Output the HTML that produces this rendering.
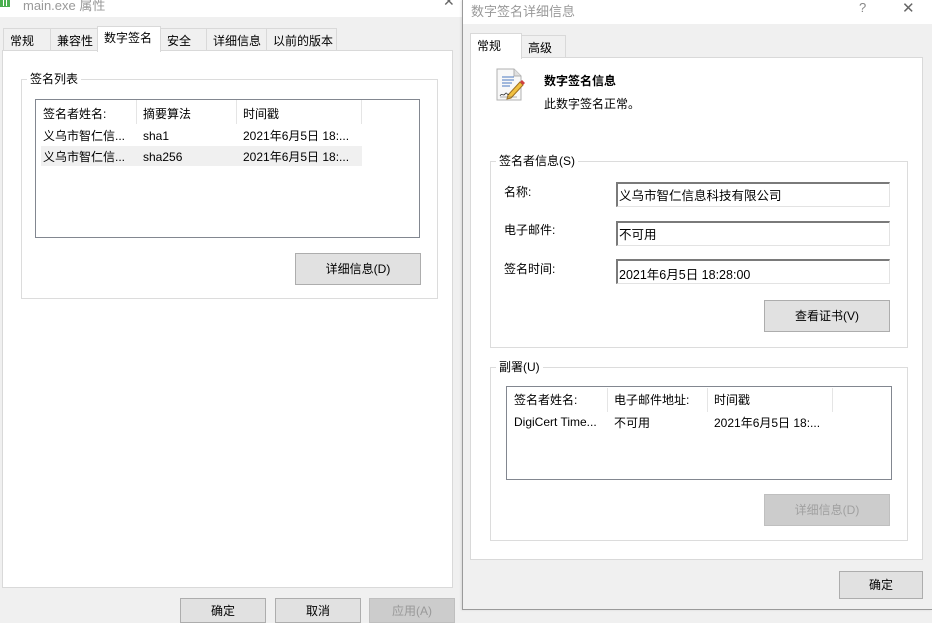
<!DOCTYPE html>
<html><head><meta charset="utf-8"><style>
*{margin:0;padding:0;box-sizing:border-box}
body{width:932px;height:613px;overflow:hidden;background:#f0f0f0;font-family:"Liberation Sans","Noto Sans CJK SC",sans-serif;font-size:12px;color:#000;position:relative}
.a{position:absolute;white-space:nowrap}
.tab{position:absolute;background:#f0f0f0;border:1px solid #d9d9d9;border-bottom:none;padding:3px 0 0 6px;height:23px}
.panel{position:absolute;background:#fff;border:1px solid #d9d9d9}
.grp{position:absolute;border:1px solid #dcdcdc}
.lbl{position:absolute;background:#fff;padding:0 3px;line-height:14px}
.lv{position:absolute;border:1px solid #828790;background:#fff}
.btn{position:absolute;background:#e1e1e1;border:1px solid #adadad;text-align:center}
.tb{position:absolute;background:#fff;border:1px solid #e3e3e3;border-top:2px solid #7a7a7a;border-left:2px solid #7a7a7a;padding:1px 0 0 1px;font-size:12.5px}
.div{position:absolute;width:1px;background:#e5e5e5}
</style></head><body>
<!-- left window -->
<div class="a" style="left:0;top:0;width:462px;height:17px;background:#fff"></div>
<div class="a" style="left:0;top:0;width:10px;height:7px;background:#4caf50"></div>
<div class="a" style="left:3px;top:0;width:1px;height:6px;background:#fff"></div>
<div class="a" style="left:6px;top:0;width:1px;height:6px;background:#fff"></div>
<div class="a" style="left:23px;top:-5px;color:#999;font-size:13px">main.exe 属性</div>
<div class="a" style="left:443px;top:-7px;color:#666;font-size:14px">✕</div>

<div class="tab" style="left:3px;top:28px;width:48px">常规</div>
<div class="tab" style="left:50px;top:28px;width:48px">兼容性</div>
<div class="tab" style="left:206px;top:28px;width:61px">详细信息</div>
<div class="tab" style="left:266px;top:28px;width:71px">以前的版本</div>
<div class="tab" style="left:160px;top:28px;width:47px">安全</div>
<div class="panel" style="left:2px;top:50px;width:451px;height:538px"></div>
<div class="tab" style="left:97px;top:26px;width:64px;height:26px;background:#fff;padding-top:2px;z-index:2">数字签名</div>

<div class="grp" style="left:21px;top:79px;width:417px;height:220px"></div>
<div class="lbl" style="left:27px;top:72px">签名列表</div>
<div class="lv" style="left:35px;top:99px;width:385px;height:139px"></div>
<div class="div" style="left:136px;top:100px;height:24px"></div>
<div class="div" style="left:236px;top:100px;height:24px"></div>
<div class="div" style="left:361px;top:100px;height:24px"></div>
<div class="a" style="left:41px;top:146px;width:321px;height:20px;background:#f0f0f0"></div>
<div class="a" style="left:43px;top:105px">签名者姓名:</div>
<div class="a" style="left:143px;top:105px">摘要算法</div>
<div class="a" style="left:243px;top:105px">时间戳</div>
<div class="a" style="left:43px;top:127px">义乌市智仁信...</div>
<div class="a" style="left:143px;top:129px">sha1</div>
<div class="a" style="left:243px;top:127px">2021年6月5日 18:...</div>
<div class="a" style="left:43px;top:148px">义乌市智仁信...</div>
<div class="a" style="left:143px;top:150px">sha256</div>
<div class="a" style="left:243px;top:148px">2021年6月5日 18:...</div>
<div class="btn" style="left:295px;top:253px;width:126px;height:32px;line-height:30px">详细信息(D)</div>

<div class="btn" style="left:180px;top:598px;width:86px;height:25px;line-height:24px">确定</div>
<div class="btn" style="left:275px;top:598px;width:86px;height:25px;line-height:24px">取消</div>
<div class="btn" style="left:369px;top:598px;width:86px;height:25px;line-height:24px;background:#ccc;border-color:#bfbfbf;color:#999">应用(A)</div>

<!-- right dialog -->
<div class="a" style="left:462px;top:0;width:470px;height:610px;background:#f0f0f0;border-left:1px solid #9a9a9a;border-bottom:1px solid #9a9a9a;box-shadow:-1px 0 2px rgba(0,0,0,.1)"></div>
<div class="a" style="left:463px;top:0;width:469px;height:24px;background:#fff"></div>
<div class="a" style="left:471px;top:1px;color:#999;font-size:13px">数字签名详细信息</div>
<div class="a" style="left:859px;top:0px;color:#888;font-size:13px">?</div>
<div class="a" style="left:902px;top:-1px;color:#666;font-size:15px">✕</div>

<div class="tab" style="left:521px;top:35px;width:45px;height:23px">高级</div>
<div class="panel" style="left:470px;top:57px;width:453px;height:503px"></div>
<div class="tab" style="left:470px;top:33px;width:52px;height:26px;background:#fff;padding-top:3px;z-index:2">常规</div>

<svg class="a" style="left:495px;top:68px" width="32" height="34" viewBox="0 0 32 34">
<path d="M2 1h17l7 7v24H2z" fill="#f8f8f8" stroke="#b0b0b0"/>
<path d="M19 1v7h7" fill="#e0e0e0" stroke="#b0b0b0"/>
<path d="M7 9h12M7 12h12M7 15h10M7 18h8" stroke="#4a78c0" stroke-width="1"/>
<path d="M13 27l12-13 3 3-12 13-4 1z" fill="#f0c040" stroke="#a07020"/>
<path d="M25 14l2-2 3 3-2 2z" fill="#d04040"/>
<path d="M5 28c2-4 3 1 5-2s2 2 4 0" fill="none" stroke="#333" stroke-width="0.8"/>
<path d="M5 29h17" stroke="#666" stroke-width="0.6"/>
</svg>
<div class="a" style="left:544px;top:72px;font-weight:bold">数字签名信息</div>
<div class="a" style="left:544px;top:95px">此数字签名正常。</div>

<div class="grp" style="left:490px;top:161px;width:418px;height:187px"></div>
<div class="lbl" style="left:496px;top:154px">签名者信息(S)</div>
<div class="a" style="left:504px;top:183px">名称:</div>
<div class="a" style="left:504px;top:221px">电子邮件:</div>
<div class="a" style="left:504px;top:260px">签名时间:</div>
<div class="tb" style="left:616px;top:182px;width:274px;height:25px">义乌市智仁信息科技有限公司</div>
<div class="tb" style="left:616px;top:221px;width:274px;height:25px">不可用</div>
<div class="tb" style="left:616px;top:259px;width:274px;height:25px;padding-top:3px">2021年6月5日 18:28:00</div>
<div class="btn" style="left:764px;top:300px;width:126px;height:32px;line-height:30px">查看证书(V)</div>

<div class="grp" style="left:490px;top:367px;width:418px;height:174px"></div>
<div class="lbl" style="left:496px;top:360px">副署(U)</div>
<div class="lv" style="left:506px;top:386px;width:386px;height:94px"></div>
<div class="div" style="left:607px;top:388px;height:24px"></div>
<div class="div" style="left:707px;top:388px;height:24px"></div>
<div class="div" style="left:832px;top:388px;height:24px"></div>
<div class="a" style="left:514px;top:391px">签名者姓名:</div>
<div class="a" style="left:614px;top:391px">电子邮件地址:</div>
<div class="a" style="left:714px;top:391px">时间戳</div>
<div class="a" style="left:514px;top:415px">DigiCert Time...</div>
<div class="a" style="left:614px;top:414px">不可用</div>
<div class="a" style="left:714px;top:414px">2021年6月5日 18:...</div>
<div class="btn" style="left:764px;top:494px;width:126px;height:32px;line-height:30px;background:#ccc;border-color:#bfbfbf;color:#a0a0a0">详细信息(D)</div>

<div class="btn" style="left:839px;top:571px;width:84px;height:28px;line-height:26px">确定</div>
</body></html>
